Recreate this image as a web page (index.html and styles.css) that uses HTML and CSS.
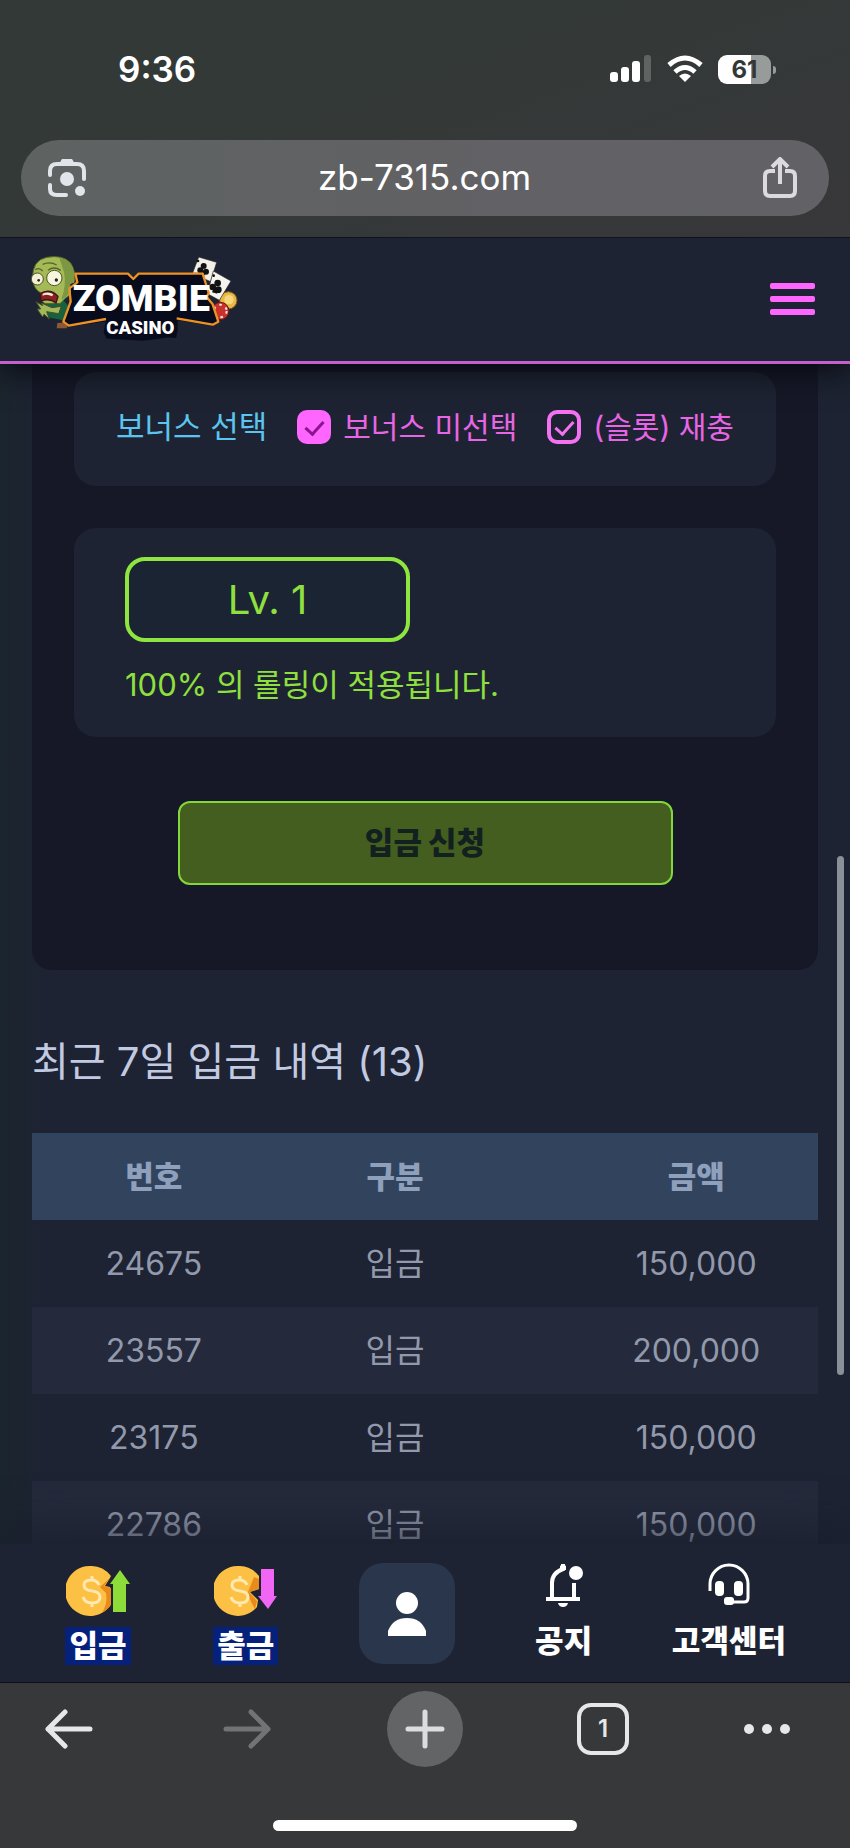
FILE: index.html
```html
<!DOCTYPE html>
<html lang="ko">
<head>
    <meta charset="UTF-8">
    <meta name="viewport" content="width=device-width, initial-scale=1.0">
    <title>ZOMBIE CASINO</title>
    <link rel="stylesheet" href="styles.css">
</head>
<body>

<div class="browser-top">
    <div class="status-bar">
        <span class="clock">9:36</span>
        <div class="status-icons">
            <svg width="42" height="28" viewBox="0 0 42 28" fill="#fff">
                <rect x="0" y="17" width="8" height="10" rx="3"/>
                <rect x="11" y="12" width="8" height="15" rx="3"/>
                <rect x="22" y="6" width="8" height="21" rx="3"/>
                <rect x="34" y="0" width="7" height="27" rx="3" fill="#5f6463"/>
            </svg>
            <svg width="36" height="28" viewBox="0 0 36 28" fill="none" stroke="#fff" stroke-width="5">
                <path d="M2 10Q18-4 34 10"/>
                <path d="M8 17Q18 8 28 17"/>
                <path d="M18 27L12 21Q18 16 24 21Z" fill="#fff" stroke="none"/>
            </svg>
            <span class="battery">61</span>
        </div>
    </div>
    <div class="url-bar">
        <button type="button" class="icon-btn" aria-label="렌즈">
            <svg width="40" height="40" viewBox="0 0 40 40" fill="none" stroke="#e1e5e9" stroke-width="4" stroke-linecap="round">
                <path d="M3 17V13Q3 6 10 6H30Q37 6 37 13V21"/>
                <path d="M3 27V31Q3 37 10 37H19"/>
                <path d="M12 6L15 1H25L28 6Z" fill="#e1e5e9" stroke="none"/>
                <circle cx="20" cy="21" r="7" fill="#e1e5e9" stroke="none"/>
                <circle cx="33" cy="33" r="5" fill="#e1e5e9" stroke="none"/>
            </svg>
        </button>
        <span class="url">zb-7315.com</span>
        <button type="button" class="icon-btn" aria-label="공유">
            <svg width="36" height="42" viewBox="0 0 36 42" fill="none" stroke="#dcdade" stroke-width="4">
                <path d="M13 14H8Q3 14 3 19V34Q3 39 8 39H28Q33 39 33 34V19Q33 14 28 14H23"/>
                <path d="M18 27V3M10 10L18 2L26 10"/>
            </svg>
        </button>
    </div>
</div>

<header class="site-header">
    <a href="#" class="logo" aria-label="ZOMBIE CASINO">
        <svg width="210" height="88" viewBox="90 60 630 264">
            <!-- cards and chips -->
            <circle cx="685" cy="196" r="26" fill="#e9b843" stroke="#7a5520" stroke-width="3"/>
            <circle cx="687" cy="194" r="14" fill="#f4d67c"/>
            <circle cx="661" cy="228" r="26" fill="#c9312c" stroke="#5b1717" stroke-width="3"/>
            <circle cx="661" cy="228" r="19" fill="none" stroke="#f2e6e0" stroke-width="6" stroke-dasharray="8 13"/>
            <path d="M596 66L650 82L632 140L577 116Z" fill="#f1efe8" stroke="#222" stroke-width="2"/>
            <path d="M640 108L693 138L658 196L622 176Z" fill="#f6f4ee" stroke="#222" stroke-width="2"/>
            <g fill="#111">
                <circle cx="611" cy="93" r="9"/><circle cx="601" cy="106" r="9"/><circle cx="618" cy="110" r="9"/><path d="M608 104L606 120L616 121Z"/>
                <circle cx="653" cy="144" r="10"/><circle cx="638" cy="156" r="10"/><circle cx="655" cy="164" r="10"/><path d="M645 150L636 172L652 176Z"/>
                <circle cx="594" cy="78" r="4"/><circle cx="641" cy="122" r="4"/>
            </g>
            <!-- zombie -->
            <path d="M120 212L190 196L214 222L190 256L150 248Z" fill="#17613f"/>
            <path d="M108 200L128 212L124 204L156 218L184 214L176 236L140 230L148 252L132 238L128 246L118 232L112 222L122 222Z" fill="#a3b75c" stroke="#435020" stroke-width="3"/>
            <path d="M98 130Q96 76 140 67Q188 58 212 84Q230 110 222 154Q218 178 196 190L180 206L136 206Q120 200 122 174Q98 160 98 130Z" fill="#a5b956" stroke="#4d5f25" stroke-width="3"/>
            <path d="M178 68Q216 74 222 112Q226 160 198 186L184 194Q200 150 192 112Z" fill="#7d9843"/>
            <path d="M106 104Q118 96 128 108M144 106Q162 92 182 106M128 88Q150 78 170 90" fill="none" stroke="#52652a" stroke-width="4"/>
            <circle cx="112" cy="132" r="18" fill="#f4f0d5" stroke="#4a5525" stroke-width="3"/>
            <circle cx="163" cy="129" r="23" fill="#f8f5df" stroke="#4a5525" stroke-width="3"/>
            <circle cx="116" cy="136" r="4" fill="#222"/>
            <circle cx="169" cy="135" r="5" fill="#222"/>
            <path d="M120 176Q150 158 174 184L168 204Q148 188 124 198Z" fill="#8c2020" stroke="#3f1515" stroke-width="4"/>
            <path d="M128 176Q146 168 160 178L156 184Q142 176 128 182Z" fill="#f0eee0"/>
            <path d="M172 264L206 262L200 280L170 280Z" fill="#8d5634"/>
            <!-- plate -->
            <path d="M228 116H384L400 132L416 116H608L622 174L616 186L636 208L655 260L638 269L530 252V286L526 306L508 304L430 314L322 308L314 292L320 256L206 272L190 260L218 196L214 150L232 142Z" fill="#080b1c" stroke="#080b1c" stroke-width="6" stroke-linejoin="round"/>
            <path d="M318 252L206 272L190 260L212 200L208 160L232 142L226 116H384L400 132L416 116H608L626 174L620 186L638 208L655 260L638 269L530 250" fill="none" stroke="#ed9224" stroke-width="7" stroke-linejoin="round"/>
            <text x="424" y="228" text-anchor="middle" class="logo-text">ZOMBIE<tspan x="421" y="298" class="logo-sub">CASINO</tspan></text>
        </svg>
    </a>
    <button type="button" class="menu-btn" aria-label="메뉴"><span></span><span></span><span></span></button>
</header>

<main class="content">
    <section class="panel">
        <div class="card bonus">
            <span class="bonus-title">보너스 선택</span>
            <label class="check"><input type="checkbox" class="filled" checked>보너스 미선택</label>
            <label class="check"><input type="checkbox" checked>(슬롯) 재충</label>
        </div>
        <div class="card level">
            <div class="level-box">Lv. 1</div>
            <p>100% 의 롤링이 적용됩니다.</p>
        </div>
        <button type="button" class="submit-btn">입금 신청</button>
    </section>

    <h2>최근 7일 입금 내역 (13)</h2>

    <table>
        <thead>
            <tr><th>번호</th><th>구분</th><th>금액</th></tr>
        </thead>
        <tbody>
            <tr><td>24675</td><td>입금</td><td>150,000</td></tr>
            <tr><td>23557</td><td>입금</td><td>200,000</td></tr>
            <tr><td>23175</td><td>입금</td><td>150,000</td></tr>
            <tr><td>22786</td><td>입금</td><td>150,000</td></tr>
        </tbody>
    </table>
    <div class="scroll-thumb"></div>
</main>

<nav class="bottom-nav">
    <a href="#" class="money">
        <svg width="64" height="52" viewBox="0 0 64 52">
            <path d="M26 1A25 25 0 1 0 44 41V22L39 21L45 11Q37 1 26 1Z" fill="#fcc045"/>
            <path d="M45 12L38 21L45 23V40Q40 46 36 48Q42 38 40 28L34 22Z" fill="#e98a1c"/>
            <path d="M33 20Q31 15 25 15Q18 15 18 20Q18 25 26 26Q34 27 34 32Q34 38 26 38Q19 38 17 32M26 11V15M26 38V42" fill="none" stroke="#ffe9b0" stroke-width="3"/>
            <path d="M54 5L64 19H60V47H47V19H44Z" fill="#8edc3a"/>
        </svg>
        <span>입금</span>
    </a>
    <a href="#" class="money">
        <svg width="64" height="52" viewBox="0 0 64 52">
            <path d="M26 1A25 25 0 1 0 43 42L44 35L36 27L45 24V11Q37 1 26 1Z" fill="#fcc045"/>
            <path d="M45 24L35 27L43 36L41 44Q34 32 34 27L40 12L45 14Z" fill="#e98a1c"/>
            <path d="M33 20Q31 15 25 15Q18 15 18 20Q18 25 26 26Q34 27 34 32Q34 38 26 38Q19 38 17 32M26 11V15M26 38V42" fill="none" stroke="#ffe9b0" stroke-width="3"/>
            <path d="M47 4H60V31H63L54 44L44 31H47Z" fill="#f266f5"/>
        </svg>
        <span>출금</span>
    </a>
    <button type="button" class="user-btn" aria-label="내 정보">
        <svg width="40" height="44" viewBox="0 0 40 44" fill="#fff">
            <circle cx="20" cy="11" r="11"/>
            <path d="M1 44V39Q6 26 20 26Q34 26 39 39V44Z"/>
        </svg>
    </button>
    <a href="#">
        <svg width="40" height="44" viewBox="0 0 40 44" fill="none" stroke="#fff" stroke-width="4">
            <path d="M2 36H36M8 36V20Q8 10 19 6V1M30 20V36"/>
            <path d="M16 3Q19 0 22 3V7H16Z" fill="#fff" stroke="none"/>
            <circle cx="32" cy="10" r="7" fill="#fff" stroke="none"/>
            <path d="M14 40H24Q23 44 19 44Q15 44 14 40Z" fill="#fff" stroke="none"/>
        </svg>
        <span>공지</span>
    </a>
    <a href="#">
        <svg width="42" height="44" viewBox="0 0 42 44" fill="none" stroke="#fff" stroke-width="3">
            <path d="M2 28V21A19 19 0 0 1 40 21V35Q40 39 36 39H24"/>
            <rect x="7" y="18" width="9" height="15" rx="4" fill="#fff" stroke="none"/>
            <rect x="26" y="18" width="9" height="15" rx="4" fill="#fff" stroke="none"/>
            <rect x="16" y="34" width="10" height="8" rx="3" fill="#fff" stroke="none"/>
        </svg>
        <span>고객센터</span>
    </a>
</nav>

<div class="browser-bottom">
    <div class="toolbar">
        <button type="button" aria-label="뒤로">
            <svg width="48" height="40" viewBox="0 0 48 40" fill="none" stroke="#e6e7e8" stroke-width="5" stroke-linecap="round" stroke-linejoin="round">
                <path d="M45 20H3M20 3L3 20L20 37"/>
            </svg>
        </button>
        <button type="button" aria-label="앞으로">
            <svg width="48" height="40" viewBox="0 0 48 40" fill="none" stroke="#727374" stroke-width="5" stroke-linecap="round" stroke-linejoin="round">
                <path d="M3 20H45M28 3L45 20L28 37"/>
            </svg>
        </button>
        <button type="button" class="new-tab" aria-label="새 탭">
            <svg width="40" height="40" viewBox="0 0 40 40" fill="none" stroke="#dcddde" stroke-width="5" stroke-linecap="round">
                <path d="M3 20H37M20 3V37"/>
            </svg>
        </button>
        <button type="button"><span class="tab-count">1</span></button>
        <button type="button" class="more" aria-label="더보기">
            <svg width="48" height="12" viewBox="0 0 48 12" fill="#e6e7e8">
                <circle cx="6" cy="6" r="5"/><circle cx="24" cy="6" r="5"/><circle cx="42" cy="6" r="5"/>
            </svg>
        </button>
    </div>
    <div class="home-bar"></div>
</div>

</body>
</html>
```
FILE: styles.css
```css
* {
    box-sizing: border-box;
}

body {
    margin: 0;
    height: 100vh;
    display: flex;
    flex-direction: column;
    background-color: #1d2332;
    color: #9299ac;
    font-family: Inter, "Noto Sans CJK KR", sans-serif;
    font-size: 31px;
    line-height: 36px;
    overflow: hidden;
}

button {
    border: none;
    padding: 0;
    background: none;
    color: inherit;
    font: inherit;
    cursor: pointer;
}

svg {
    display: block;
}

/* browser */
.browser-top {
    flex: none;
    position: relative;
    z-index: 2;
    padding: 48px 21px 21px;
    background: linear-gradient(160deg, #333937 40%, #38373a);
    color: #fff;
}

.status-bar {
    display: flex;
    justify-content: space-between;
    align-items: center;
    height: 42px;
    padding: 0 58px 0 97px;
}

.clock {
    font-size: 35px;
    font-weight: 600;
}

.status-icons {
    display: flex;
    align-items: center;
    gap: 15px;
}

.battery {
    position: relative;
    width: 53px;
    height: 29px;
    border-radius: 9px;
    background: linear-gradient(to right, #fff 62%, #979b9a 62%);
    color: #333837;
    font-size: 24px;
    font-weight: 700;
    line-height: 29px;
    text-align: center;
}

.battery::after {
    content: "";
    position: absolute;
    right: -5px;
    top: 11px;
    width: 3px;
    height: 8px;
    border-radius: 0 3px 3px 0;
    background-color: #979b9a;
}

.url-bar {
    display: flex;
    justify-content: space-between;
    align-items: center;
    height: 76px;
    margin-top: 50px;
    padding: 0 31px 0 26px;
    border-radius: 38px;
    background: linear-gradient(to right, #5e6362, #626165 60%);
}

.url {
    font-size: 35px;
    line-height: 40px;
    padding-bottom: 2px;
}

/* header */
.site-header {
    flex: none;
    position: relative;
    z-index: 1;
    display: flex;
    justify-content: space-between;
    align-items: center;
    height: 127px;
    padding: 0 35px 2px 30px;
    border-top: 1px solid #10131f;
    border-bottom: 3px solid #c45fd0;
    background-color: #1d2332;
    box-shadow: 0 4px 30px #05070c;
}

.logo-text {
    font-family: Roboto, sans-serif;
    font-size: 112px;
    font-weight: 900;
    fill: #fff;
}

.logo-sub {
    font-size: 56px;
}

.menu-btn {
    display: flex;
    flex-direction: column;
    gap: 7px;
}

.menu-btn span {
    width: 45px;
    height: 6px;
    border-radius: 2px;
    background-color: #ff66ff;
}

/* content */
.content {
    flex: 1;
    min-height: 0;
    position: relative;
    padding: 0 32px;
    overflow: hidden;
    background: linear-gradient(to right, #1b252e, #1d2332 40px);
}

.panel {
    padding: 8px 42px 85px;
    border-radius: 0 0 20px 20px;
    background-color: #161827;
}

.card {
    border-radius: 22px;
    background-color: #1d2332;
}

.bonus {
    display: flex;
    justify-content: space-between;
    align-items: center;
    height: 114px;
    padding: 0 42px 4px;
}

.bonus-title {
    color: #5bc4ef;
}

.check {
    display: flex;
    align-items: center;
    gap: 12px;
    color: #e865e6;
    font-size: 30px;
}

.check input {
    appearance: none;
    display: flex;
    justify-content: center;
    width: 34px;
    height: 34px;
    margin: 0;
    padding-top: 3px;
    border: 4px solid #f472f2;
    border-radius: 10px;
}

.check input::before {
    content: "";
    width: 8px;
    height: 15px;
    border: solid #f472f2;
    border-width: 0 3px 3px 0;
    transform: rotate(42deg);
}

.check .filled {
    border-color: #ff66ff;
    background-color: #ff66ff;
}

.check .filled::before {
    border-color: #8b1490;
}

.level {
    margin-top: 42px;
    padding: 29px 51px 34px;
    color: #8fe03e;
}

.level-box {
    width: 285px;
    height: 85px;
    border: 4px solid #8fe53f;
    border-radius: 20px;
    background-color: #1b2433;
    font-size: 40px;
    line-height: 77px;
    text-align: center;
}

.level p {
    margin: 25px 0 0;
}

.submit-btn {
    display: block;
    width: 495px;
    max-width: 100%;
    height: 84px;
    margin: 64px auto 0;
    border: 2px solid #82d83a;
    border-radius: 12px;
    background-color: #435e1f;
    color: #12211f;
    font-weight: 900;
}

h2 {
    margin: 66px 0 45px;
    color: #c2cae2;
    font-size: 40px;
    font-weight: 400;
    line-height: 52px;
}

table {
    width: 100%;
    border-collapse: collapse;
    table-layout: fixed;
}

th,
td {
    height: 87px;
    padding: 0;
    font-size: 32px;
    text-align: center;
}

th {
    background-color: #32445d;
    color: #8fa0bd;
    font-size: 31px;
    font-weight: 900;
}

th:nth-child(1),
th:nth-child(3) {
    width: 31%;
}

th:nth-child(2),
td:nth-child(2) {
    padding-right: 60px;
}

tbody tr:nth-child(even) {
    background-color: #242a3b;
}

.scroll-thumb {
    position: absolute;
    top: 492px;
    right: 6px;
    width: 7px;
    height: 519px;
    border-radius: 4px;
    background-color: #8b8f97;
}

/* bottom menu */
.bottom-nav {
    flex: none;
    position: relative;
    z-index: 1;
    display: flex;
    justify-content: space-between;
    height: 139px;
    padding: 19px 64px 0;
    border-bottom: 1px solid #0d101b;
    background-color: #1d2332;
    box-shadow: 0 0 60px #171b2a;
    color: #fff;
    font-weight: 900;
}

.bottom-nav a {
    display: flex;
    flex-direction: column;
    align-items: center;
    gap: 16px;
    color: inherit;
    text-decoration: none;
}

.bottom-nav .money {
    gap: 10px;
    min-width: 68px;
    padding-top: 2px;
}

.money span {
    padding: 0 4px;
    background-color: #05217c;
    line-height: 38px;
}

.user-btn {
    display: flex;
    justify-content: center;
    align-items: center;
    width: 96px;
    height: 101px;
    border-radius: 24px;
    background-color: #29364b;
}

.browser-bottom {
    flex: none;
    position: relative;
    z-index: 2;
    height: 165px;
    padding: 8px 31px 0;
    background-color: #363839;
}

.toolbar {
    display: flex;
    justify-content: space-between;
    align-items: center;
}

.toolbar button {
    display: flex;
    justify-content: center;
    align-items: center;
    width: 76px;
    height: 76px;
}

.toolbar .more {
    justify-content: flex-start;
}

.toolbar .new-tab {
    border-radius: 50%;
    background-color: #626466;
}

.tab-count {
    width: 52px;
    height: 52px;
    border: 4px solid #e6e7e8;
    border-radius: 14px;
    color: #e6e7e8;
    font-size: 24px;
    font-weight: 600;
    line-height: 44px;
}

.home-bar {
    width: 304px;
    height: 11px;
    margin: 53px auto 0;
    border-radius: 6px;
    background-color: #fff;
}
```
